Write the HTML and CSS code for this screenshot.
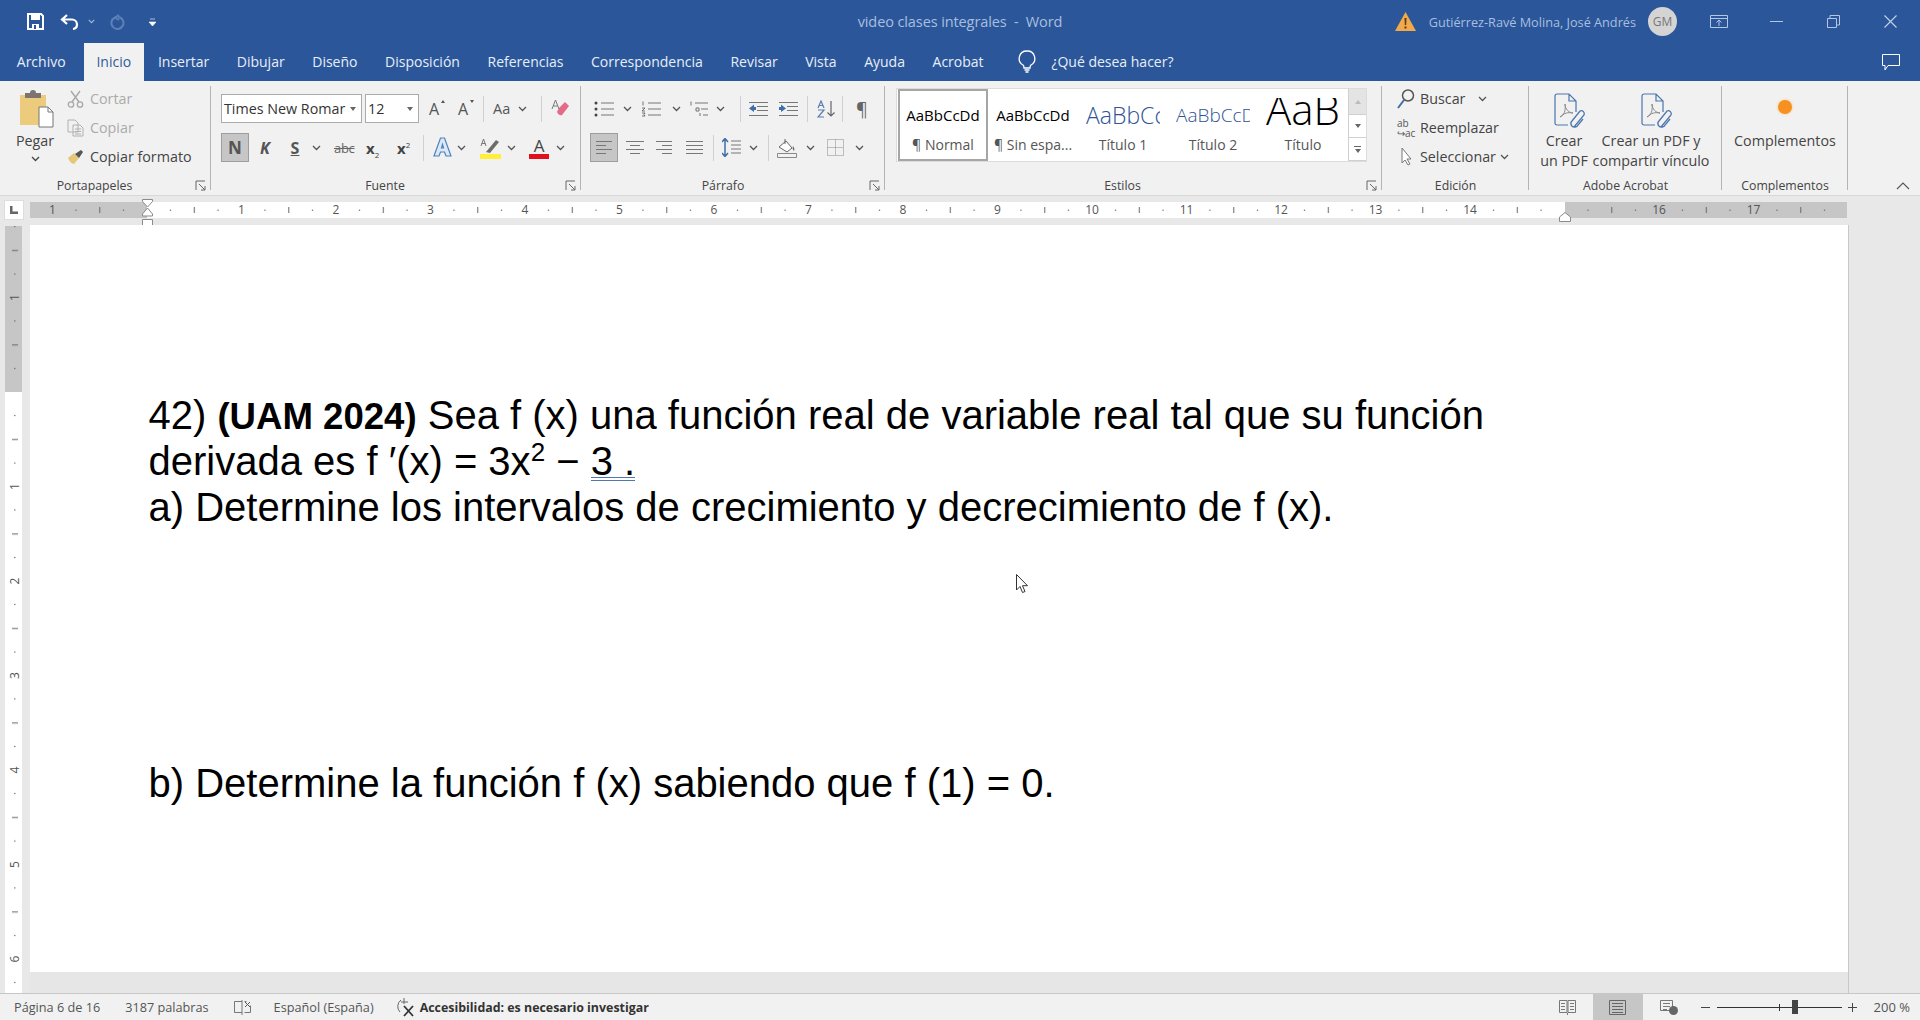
FILE: index.html
```html
<!DOCTYPE html>
<html lang="es">
<head>
<meta charset="utf-8">
<title>video clases integrales - Word</title>
<link rel="stylesheet" href="styles.css">
</head>
<body>
<svg class="defs" width="0" height="0" aria-hidden="true">
  <symbol id="chev" viewBox="0 0 9 6"><path d="M1 1l3.5 3.5L8 1" fill="none" stroke="currentColor" stroke-width="1.3"/></symbol>
  <symbol id="launch" viewBox="0 0 12 12"><path d="M1 10V1h9M4 4l6 6M10 6v4H6" fill="none" stroke="#666" stroke-width="1"/></symbol>
  <symbol id="pdf" viewBox="0 0 34 36"><path d="M2 3a2 2 0 012-2h12l7 7v11M15 32H4a2 2 0 01-2-2V3M16 1v7h7" fill="none" stroke="#4a76ad" stroke-width="1.200"/><path d="M7 24c4-1 6-7 5-13 0 5 4 9 8 9-5-1-9 0-13 4z" fill="none" stroke="#8a8a8a" stroke-width="1"/><path d="M21 34l10-12a3 3 0 00-4-4l-8 10a3.500 3.500 0 003 6 3 3 0 003-2l5-6" fill="none" stroke="#4a76ad" stroke-width="1.300"/></symbol>
</svg>

<header class="titlebar">
  <div class="qat">
    <svg class="ic-save" width="17" height="17" viewBox="0 0 17 17"><path d="M1 1h13l2 2v13H1z" fill="none" stroke="#fff" stroke-width="2"/><path d="M4 1h9v6H4zM5 11h7v5H5z" fill="#fff"/><path d="M7 12h2v4H7z" fill="#2b579a"/></svg>
    <svg class="ic-undo" width="20" height="16" viewBox="0 0 20 16"><path d="M7 1L2 5.500 7 10M2 5.500h10a5 5 0 015 5 4.500 4.500 0 01-4 4.500" fill="none" stroke="#fff" stroke-width="2.200"/></svg>
    <svg class="ic-chev-q" width="7" height="5"><use href="#chev"/></svg>
    <svg class="ic-redo" width="16" height="16" viewBox="0 0 16 16"><path d="M10 1L6 3.500 10 6M6 3.500A6 6 0 109 3" fill="none" stroke="#5c80b8" stroke-width="2"/></svg>
    <svg class="ic-custom" width="7" height="8" viewBox="0 0 7 8"><path d="M1 1h5M0 4h7L3.500 8z" fill="#fff" stroke="#fff" stroke-width=".6"/></svg>
  </div>
  <div class="doc-title">video clases integrales&nbsp; - &nbsp;Word</div>
  <div class="account">
    <svg width="21" height="19" viewBox="0 0 21 19"><path d="M10.500 0L21 19H0z" fill="#f0a94b"/><path d="M9.500 6h2l-.3 7h-1.400zM9.500 14.500h2v2h-2z" fill="#5a3a10"/></svg>
    <span class="user">Gutiérrez-Ravé Molina, José Andrés</span>
    <span class="avatar">GM</span>
    <svg class="ic-display" width="18" height="13" viewBox="0 0 18 13"><path d="M.5.500h17v12H.500zM.5 3.500h17M9 11V5M6.500 7.500L9 5l2.500 2.500" fill="none" stroke="#b4c6e4"/></svg>
    <svg class="ic-min" width="13" height="1" viewBox="0 0 13 1"><path d="M0 .5h13" stroke="#b4c6e4"/></svg>
    <svg class="ic-restore" width="13" height="13" viewBox="0 0 13 13"><path d="M.5 3.500h9v9h-9zM3 3.500V.5h9.500V10H9.500" fill="none" stroke="#b4c6e4"/></svg>
    <svg class="ic-close" width="13" height="13" viewBox="0 0 13 13"><path d="M.5.5l12 12M12.500.5l-12 12" stroke="#c3d2ea" stroke-width="1.100"/></svg>
  </div>
</header>

<nav class="tabs">
  <span class="tab">Archivo</span>
  <span class="tab active">Inicio</span>
  <span class="tab">Insertar</span>
  <span class="tab">Dibujar</span>
  <span class="tab">Diseño</span>
  <span class="tab">Disposición</span>
  <span class="tab">Referencias</span>
  <span class="tab">Correspondencia</span>
  <span class="tab">Revisar</span>
  <span class="tab">Vista</span>
  <span class="tab">Ayuda</span>
  <span class="tab">Acrobat</span>
  <svg class="ic-bulb" width="18" height="23" viewBox="0 0 18 23"><path d="M9 1a7.500 7.500 0 00-4 14c.8.600 1 1.500 1 3h6c0-1.500.2-2.400 1-3A7.500 7.500 0 009 1zM6.500 20h5M7.500 22h3" fill="none" stroke="#fff" stroke-width="1.300"/></svg>
  <span class="tell">¿Qué desea hacer?</span>
  <svg class="ic-comment" width="18" height="17" viewBox="0 0 18 17"><path d="M.5.500h17v11H6L3 16v-4.500H.5z" fill="none" stroke="#fff"/></svg>
</nav>

<section class="ribbon">
  <div class="group g-clip">
    <div class="body clip-body">
      <div class="paste">
        <svg width="34" height="38" viewBox="0 0 34 38"><path d="M0 5h26v30H0z" fill="#eccb7c"/><path d="M5 3h5a3 3 0 016 0h5v5H5z" fill="#7c7470"/><path d="M19 17h9l5 5v15H19z" fill="#fff" stroke="#777"/><path d="M28 17v5h5" fill="none" stroke="#777"/></svg>
        <span class="paste-label">Pegar</span>
        <svg class="paste-chev" width="9" height="6"><use href="#chev"/></svg>
      </div>
      <div class="clip-list">
        <div class="clip-row off"><svg width="17" height="18" viewBox="0 0 17 18"><path d="M4 1l8 11M13 1L5 12" stroke="#a8a8a8" stroke-width="1.400" fill="none"/><circle cx="4" cy="14.500" r="2.700" fill="none" stroke="#a8a8a8" stroke-width="1.300"/><circle cx="13" cy="14.500" r="2.700" fill="none" stroke="#a8a8a8" stroke-width="1.300"/></svg><span>Cortar</span></div>
        <div class="clip-row off"><svg width="17" height="18" viewBox="0 0 17 18"><path d="M1 1h7l3 3v9H1zM6 6h7l3 3v8H6z" fill="#f1f1f1" stroke="#b0b0b0"/><path d="M8 10h6M8 12.500h6M8 15h6" stroke="#b0b0b0"/></svg><span>Copiar</span></div>
        <div class="clip-row"><svg width="17" height="16" viewBox="0 0 17 16"><path d="M1 9l6-5 5 5-5 6c-2 0-5-3-6-6z" fill="#e4c878"/><path d="M8 5l6-4 2 2-4 6z" fill="#555"/></svg><span>Copiar formato</span></div>
      </div>
    </div>
    <div class="label">Portapapeles</div>
    <svg class="launcher" width="12" height="12"><use href="#launch"/></svg>
  </div>

  <div class="group g-font">
    <div class="body rows">
      <div class="row">
        <div class="combo c-font"><span>Times New Romar</span><b class="tri"></b></div>
        <div class="combo c-size"><span>12</span><b class="tri"></b></div>
        <span class="gl g-a ml10">A<i class="up"></i></span>
        <span class="gl g-a ml16">A<i class="down"></i></span>
        <span class="sep ml12"></span>
        <span class="gl g-aa ml9">Aa</span>
        <svg class="ml6 chev" width="9" height="6"><use href="#chev"/></svg>
        <span class="sep ml14"></span>
        <svg class="ml9" width="18" height="19" viewBox="0 0 18 19"><path d="M8 9l6-6 4 4-7 9c-2 1-4-1-5-3z" fill="#e56a86"/><path d="M1 10L4.500 1 8 10M2.500 7h4" fill="none" stroke="#777"/></svg>
      </div>
      <div class="row">
        <span class="pressed gl-b">N</span>
        <span class="gl-b gl-i ml9">K</span>
        <span class="gl-b gl-u ml16">S</span>
        <svg class="ml10 chev" width="9" height="6"><use href="#chev"/></svg>
        <span class="gl-strike ml13">abc</span>
        <span class="gl-sub ml12">x<sub>2</sub></span>
        <span class="gl-sub ml13">x<sup>2</sup></span>
        <span class="sep ml8"></span>
        <svg class="ml9" width="19" height="21" viewBox="0 0 19 21"><path d="M7.500 1h4L18 19h-5l-1.500-4h-4L6 19H1zM8.500 11h2l-1-3.500z" fill="#dbe8f6" stroke="#4f82bd" stroke-width="1.200"/></svg>
        <svg class="ml5 chev" width="9" height="6"><use href="#chev"/></svg>
        <svg class="ml14" width="21" height="22" viewBox="0 0 21 22"><path d="M1 9l2.500-7L6 9M1.800 6.500h3.500" fill="none" stroke="#777"/><path d="M6 15L16 3l3 2-9 11z" fill="#6c6c6c"/><path d="M0 17h21v5H0z" fill="#ffef3a"/></svg>
        <svg class="ml6 chev" width="9" height="6"><use href="#chev"/></svg>
        <span class="gl-color ml13">A</span>
        <svg class="ml7 chev" width="9" height="6"><use href="#chev"/></svg>
      </div>
    </div>
    <div class="label">Fuente</div>
    <svg class="launcher" width="12" height="12"><use href="#launch"/></svg>
  </div>

  <div class="group g-para">
    <div class="body rows">
      <div class="row row-p1">
        <svg width="20" height="16" viewBox="0 0 20 16"><path d="M7 2h13M7 8h13M7 14h13" stroke="#777"/><circle cx="2" cy="2" r="1.500" fill="#444"/><circle cx="2" cy="8" r="1.500" fill="#444"/><circle cx="2" cy="14" r="1.500" fill="#444"/></svg>
        <svg class="ml9 chev" width="9" height="6"><use href="#chev"/></svg>
        <svg class="ml9" width="20" height="16" viewBox="0 0 20 16"><path d="M7 2h13M7 8h13M7 14h13" stroke="#777"/><path d="M2 .5v4M1 7h3L1 10h3M1 12h3l-1 1.500L4 15H1" fill="none" stroke="#555" stroke-width=".8"/></svg>
        <svg class="ml11 chev" width="9" height="6"><use href="#chev"/></svg>
        <svg class="ml8" width="20" height="16" viewBox="0 0 20 16"><path d="M6 2h13M12 8h7M14 14h5" stroke="#777"/><path d="M2 .5v4M7 7h3v3H7zM11 12v3" fill="none" stroke="#555" stroke-width=".8"/></svg>
        <svg class="ml7 chev" width="9" height="6"><use href="#chev"/></svg>
        <span class="sep ml15"></span>
        <svg class="ml8" width="19" height="14" viewBox="0 0 19 14"><path d="M0 .5h19M8 4.500h11M8 8.500h11M0 13.500h19" stroke="#777"/><path d="M0 6.500l5-4v2.500h2v3H5V10z" fill="#3f6ea8"/></svg>
        <svg class="ml11" width="19" height="14" viewBox="0 0 19 14"><path d="M0 .5h19M8 4.500h11M8 8.500h11M0 13.500h19" stroke="#777"/><path d="M7 6.500l-5-4v2.500H0v3h2V10z" fill="#3f6ea8"/></svg>
        <span class="sep ml9"></span>
        <svg class="ml9" width="18" height="18" viewBox="0 0 18 18"><path d="M1 8l3-7 3 7M2 5.500h4M1 10h6L1 17h6" fill="none" stroke="#5a7faf" stroke-width="1.200"/><path d="M14 1v15M10.500 12.500L14 16l3.500-3.500" fill="none" stroke="#666" stroke-width="1.200"/></svg>
        <span class="sep ml7"></span>
        <span class="pilcrow ml13">¶</span>
      </div>
      <div class="row">
        <span class="pressed"><svg width="16" height="13" viewBox="0 0 16 13"><path d="M0 .5h16M0 4.500h10M0 8.500h16M0 12.500h10" stroke="#777"/></svg></span>
        <svg class="ml8" width="18" height="13" viewBox="0 0 18 13"><path d="M0 .5h18M4 4.500h10M0 8.500h18M4 12.500h10" stroke="#777"/></svg>
        <svg class="ml12" width="16" height="13" viewBox="0 0 16 13"><path d="M0 .5h16M6 4.500h10M0 8.500h16M6 12.500h10" stroke="#777"/></svg>
        <svg class="ml14" width="17" height="13" viewBox="0 0 17 13"><path d="M0 .5h17M0 4.500h17M0 8.500h17M0 12.500h17" stroke="#777"/></svg>
        <span class="sep ml10"></span>
        <svg class="ml8" width="19" height="19" viewBox="0 0 19 19"><path d="M3 1v17M0 4l3-3.500L6 4M0 15l3 3.500L6 15" fill="none" stroke="#3f6ea8" stroke-width="1.500"/><path d="M9 3h10M9 7h10M9 11h10M9 15h10" stroke="#777"/></svg>
        <svg class="ml8 chev" width="9" height="6"><use href="#chev"/></svg>
        <span class="sep ml10"></span>
        <svg class="ml8" width="20" height="20" viewBox="0 0 20 20"><path d="M2 9l7-6 6 7-5 4z" fill="#fff" stroke="#666"/><path d="M8 1v5" stroke="#666"/><path d="M16 8c1 2 2 3 1 5-1-1-2-3-1-5z" fill="#666"/><path d="M.5 15.500h19v4H.5z" fill="#f1f1f1" stroke="#888"/></svg>
        <svg class="ml9 chev" width="9" height="6"><use href="#chev"/></svg>
        <svg class="ml12" width="17" height="17" viewBox="0 0 17 17"><path d="M.5.500h16v16H.5zM8.500.5v16M.5 8.500h16" fill="none" stroke="#888" stroke-dasharray="1 1"/></svg>
        <svg class="ml11 chev" width="9" height="6"><use href="#chev"/></svg>
      </div>
    </div>
    <div class="label">Párrafo</div>
    <svg class="launcher" width="12" height="12"><use href="#launch"/></svg>
  </div>

  <div class="group g-styles">
    <div class="body gallery-wrap">
      <div class="gallery">
        <div class="style selected"><span class="prev">AaBbCcDd</span><span class="name">¶ Normal</span></div>
        <div class="style"><span class="prev">AaBbCcDd</span><span class="name">¶ Sin espa...</span></div>
        <div class="style"><span class="prev p-h1">AaBbCc</span><span class="name">Título 1</span></div>
        <div class="style"><span class="prev p-h2">AaBbCcD</span><span class="name">Título 2</span></div>
        <div class="style"><span class="prev p-t">AaB</span><span class="name">Título</span></div>
        <div class="scroller">
          <span class="sc off"><b class="tri-up"></b></span>
          <span class="sc"><b class="tri"></b></span>
          <span class="sc sc-more"><i></i><b class="tri"></b></span>
        </div>
      </div>
    </div>
    <div class="label">Estilos</div>
    <svg class="launcher" width="12" height="12"><use href="#launch"/></svg>
  </div>

  <div class="group g-edit">
    <div class="body edit-list">
      <div class="edit-row"><svg width="18" height="22" viewBox="0 0 18 22"><circle cx="11" cy="7.500" r="5.500" fill="none" stroke="#555" stroke-width="1.500"/><path d="M7 12l-6 8" stroke="#3f6ea8" stroke-width="2"/></svg><span>Buscar</span><svg class="ml13 chev" width="9" height="6"><use href="#chev"/></svg></div>
      <div class="edit-row"><span class="abac">ab<br>↪ac</span><span>Reemplazar</span></div>
      <div class="edit-row"><svg width="18" height="19" viewBox="0 0 18 19"><path d="M5 1v15l3-3 3 5 2-1-3-5h4z" fill="#fff" stroke="#777"/></svg><span>Seleccionar</span><svg class="ml4 chev" width="9" height="6"><use href="#chev"/></svg></div>
    </div>
    <div class="label">Edición</div>
  </div>

  <div class="group g-acro">
    <div class="body acro-body">
      <div class="big b-pdf1"><svg width="34" height="36"><use href="#pdf"/></svg><span>Crear<br>un PDF</span></div>
      <div class="big b-pdf2"><svg width="34" height="36"><use href="#pdf"/></svg><span>Crear un PDF y<br>compartir vínculo</span></div>
    </div>
    <div class="label">Adobe Acrobat</div>
  </div>

  <div class="group g-comp">
    <div class="body comp-body"><i class="dot"></i><span>Complementos</span></div>
    <div class="label">Complementos</div>
  </div>

  <div class="collapse"><svg width="14" height="8" viewBox="0 0 14 8"><path d="M1 7l6-6 6 6" fill="none" stroke="#555" stroke-width="1.100"/></svg></div>
</section>

<div class="rulerbar">
  <div class="tabsel"><svg width="8" height="8" viewBox="0 0 8 8"><path d="M0 0h2.500v5.500H8V8H0z" fill="#666"/></svg></div>
  <div class="hruler">
    <svg width="1817" height="16" viewBox="0 0 1817 16">
      <defs>
        <pattern id="ht" patternUnits="userSpaceOnUse" x="117" y="0" width="94.5" height="16">
          <rect x="23" y="7.500" width="1" height="1.500" fill="#666"/>
          <rect x="46.800" y="5" width="1" height="6" fill="#666"/>
          <rect x="70.500" y="7.500" width="1" height="1.500" fill="#666"/>
        </pattern>
      </defs>
      <rect width="1817" height="16" fill="#c6c6c6"/>
      <rect x="117" width="1418" height="16" fill="#fff"/>
      <rect width="1817" height="16" fill="url(#ht)"/>
      <g class="rn">
        <text x="22.500" y="12">1</text><text x="211.500" y="12">1</text><text x="306" y="12">2</text><text x="400.500" y="12">3</text><text x="495" y="12">4</text><text x="589.500" y="12">5</text><text x="684" y="12">6</text><text x="778.500" y="12">7</text><text x="873" y="12">8</text><text x="967.500" y="12">9</text><text x="1062" y="12">10</text><text x="1156.500" y="12">11</text><text x="1251" y="12">12</text><text x="1345.500" y="12">13</text><text x="1440" y="12">14</text><text x="1629" y="12">16</text><text x="1723.500" y="12">17</text>
      </g>
    </svg>
    <svg class="indent-l" width="12" height="28" viewBox="0 0 12 28"><path d="M.5.500h10v2L5.500 8 .5 2.500zM5.500 9l5 6v2H.5v-2zM.5 20.500h10v7H.5z" fill="#fff" stroke="#8a8a8a"/></svg>
    <svg class="indent-r" width="12" height="10" viewBox="0 0 12 10"><path d="M.5 9.500V5L6 .5 11.500 5v4.500z" fill="#fff" stroke="#8a8a8a"/></svg>
  </div>
</div>

<main class="workspace">
  <div class="vcol">
    <svg class="vruler" width="17" height="767" viewBox="0 0 17 767">
      <defs>
        <pattern id="vt" patternUnits="userSpaceOnUse" x="0" y="71.500" width="17" height="94.500">
          <rect x="9" y="23" width="1.500" height="1" fill="#666"/>
          <rect x="7" y="47" width="6" height="1" fill="#666"/>
          <rect x="9" y="70.500" width="1.500" height="1" fill="#666"/>
        </pattern>
      </defs>
      <rect width="17" height="767" fill="#fff"/>
      <rect width="17" height="166" fill="#c6c6c6"/>
      <rect width="17" height="767" fill="url(#vt)"/>
      <g class="rn">
        <text transform="translate(14 71.500) rotate(-90)">1</text>
        <text transform="translate(14 260.500) rotate(-90)">1</text>
        <text transform="translate(14 355) rotate(-90)">2</text>
        <text transform="translate(14 449.500) rotate(-90)">3</text>
        <text transform="translate(14 544) rotate(-90)">4</text>
        <text transform="translate(14 638.500) rotate(-90)">5</text>
        <text transform="translate(14 733) rotate(-90)">6</text>
      </g>
    </svg>
  </div>
  <div class="pagearea">
    <article class="page">
      <p>42) <strong>(UAM 2024)</strong> Sea f (x) una función real de variable real tal que su función</p>
      <p>derivada es f <span class="prime">′</span>(x) = 3x<sup>2</sup> − <span class="grammar">3 .</span></p>
      <p class="part-a">a) Determine los intervalos de crecimiento y decrecimiento de f (x).</p>
      <p>b) Determine la función f (x) sabiendo que f (1) = 0.</p>
      <svg class="cursor" width="13" height="20" viewBox="0 0 13 20"><path d="M.5.500v15.500l3.500-3.500 2.500 6 2.500-1-2.500-5.800h5z" fill="#fff" stroke="#333"/></svg>
    </article>
  </div>
  <div class="rightgutter"></div>
</main>

<footer class="status">
  <span class="st st-page">Página 6 de 16</span>
  <span class="st st-words">3187 palabras</span>
  <svg class="st-book" width="17" height="15" viewBox="0 0 17 15"><path d="M8 1.500H.5v11H8M8 0v15M10.500 1.500h2M10.500 12.500h6v-7" fill="none" stroke="#777"/><path d="M11 2l5 5M16 2l-5 5" stroke="#555"/></svg>
  <span class="st st-lang">Español (España)</span>
  <svg class="st-acc" width="21" height="20" viewBox="0 0 21 20"><path d="M6 3a8 8 0 00-1 12M9 1v6M6 5h7" fill="none" stroke="#666"/><path d="M9 9l9 10M18 9L9 19" stroke="#333" stroke-width="1.800"/></svg>
  <strong class="st st-acc-t">Accesibilidad: es necesario investigar</strong>
  <div class="st-right">
    <svg width="17" height="15" viewBox="0 0 17 15"><path d="M.5.500H8v12H.5zM9 .5h7.500v12H9zM2 3.500h4M2 6.500h4M2 9.500h4M11 3.500h4M11 6.500h4M11 9.500h4M8.500 13v2" fill="none" stroke="#777"/></svg>
    <span class="view-on"><svg width="17" height="15" viewBox="0 0 17 15"><path d="M.5.500h16v14H.5zM3 3.500h11M3 6.500h11M3 9.500h11M3 12.500h11" fill="none" stroke="#666"/></svg></span>
    <svg width="18" height="15" viewBox="0 0 18 15"><path d="M12 10.500H.5V.5h12V7M3 3.500h7M3 6.500h7M3 9.500h4" fill="none" stroke="#777"/><circle cx="13.500" cy="10.500" r="4.500" fill="#666"/></svg>
    <span class="zm-minus"></span>
    <div class="slider"><i class="tick"></i><i class="thumb"></i></div>
    <span class="zm-plus"></span>
    <span class="st zm-val">200 %</span>
  </div>
</footer>
</body>
</html>
```

FILE: styles.css
```css
* { box-sizing: border-box; }
html, body { margin: 0; height: 100%; }
body {
  display: flex; flex-direction: column; height: 1020px; overflow: hidden;
  background: #e6e6e6; color: #444;
  font-family: "Open Sans", "Noto Sans", sans-serif; font-size: 14.300px;
}
svg { display: block; flex: none; }
.defs { position: absolute; }
.chev { color: #555; }

.ml4 { margin-left: 4px; } .ml5 { margin-left: 5px; } .ml6 { margin-left: 6px; }
.ml7 { margin-left: 7px; } .ml8 { margin-left: 8px; } .ml9 { margin-left: 9px; }
.ml10 { margin-left: 10px; } .ml11 { margin-left: 11px; } .ml12 { margin-left: 12px; }
.ml13 { margin-left: 13px; } .ml14 { margin-left: 14px; } .ml15 { margin-left: 15px; }
.ml16 { margin-left: 16px; }

/* title bar */
.titlebar {
  height: 43px; flex: none; background: #2b579a;
  display: grid; grid-template-columns: 1fr auto 1fr; align-items: center;
}
.qat { display: flex; align-items: center; padding-left: 27px; }
.ic-undo { margin-left: 16px; }
.ic-chev-q { margin-left: 8px; color: #a8bcdc; }
.ic-redo { margin-left: 14px; }
.ic-custom { margin-left: 24px; }
.doc-title { color: #a9bedf; font-size: 14.500px; letter-spacing: -.1px; white-space: nowrap; }
.account { display: flex; align-items: center; justify-content: flex-end; padding-right: 23px; }
.user { margin-left: 13px; color: #a9bedf; font-size: 12.700px; white-space: nowrap; }
.avatar {
  margin-left: 12px; width: 29px; height: 29px; border-radius: 50%; background: #d4d4d4;
  color: #777; font-size: 12px; display: flex; align-items: center; justify-content: center;
}
.ic-display { margin-left: 33px; }
.ic-min { margin-left: 42px; }
.ic-restore { margin-left: 44px; }
.ic-close { margin-left: 44px; }

/* tabs */
.tabs {
  height: 38px; flex: none; background: #2b579a; display: flex; align-items: center;
  padding-left: 3px; color: #fff;
}
.tab {
  height: 38px; padding: 0 13.800px 2px; display: flex; align-items: center;
  font-size: 14px; color: #e8eef7; white-space: nowrap;
}
.tab.active { background: #f1f1f1; color: #2f5b99; padding: 0 13px 2px 12px; margin: 0 0 0 5px; }
.ic-bulb { margin-left: 21px; margin-bottom: 2px; }
.tell { margin-left: 15px; margin-bottom: 2px; color: #e8eef7; font-size: 14px; white-space: nowrap; }
.ic-comment { margin-left: auto; margin-right: 20px; }

/* ribbon */
.ribbon { height: 114px; flex: none; background: #f1f1f1; display: flex; position: relative; }
.group {
  height: 114px; display: flex; flex-direction: column; position: relative; flex: none;
  background: linear-gradient(#b4b4b4, #b4b4b4) right 5px / 1px 104px no-repeat;
}
.g-clip { width: 211px; }
.g-font { width: 370px; }
.g-para { width: 304px; }
.g-styles { width: 497px; }
.g-edit { width: 147px; }
.g-acro { width: 193px; }
.g-comp { width: 126px; }
.body { flex: 1; min-height: 0; }
.label { height: 18px; flex: none; font-size: 12.300px; text-align: center; color: #444; line-height: 18px; }
.g-clip .label, .g-font .label, .g-styles .label { padding-right: 22px; }
.g-para .label { padding-right: 20px; }
.launcher { position: absolute; right: 4px; bottom: 3px; }
.collapse { flex: 1; display: flex; justify-content: flex-end; align-items: flex-end; padding: 0 10px 5px 0; }

.clip-body { display: flex; padding-left: 10px; }
.paste { width: 50px; display: flex; flex-direction: column; align-items: center; padding-top: 9px; }
.paste svg:first-child { margin-left: 4px; }
.paste-label { line-height: 20px; margin-top: 3px; }
.paste-chev { margin-top: 5px; }
.clip-list { margin-left: 7px; padding-top: 3px; }
.clip-row { height: 29px; display: flex; align-items: center; gap: 6px; white-space: nowrap; }
.clip-row.off { color: #ababab; }

.rows { padding: 13px 0 0 10px; }
.g-para .rows { padding-left: 9px; }
.row { height: 29px; display: flex; align-items: center; margin-bottom: 10px; }
.row-p1 { padding-left: 4px; }
.combo {
  height: 29px; border: 1px solid #ababab; background: #fff; display: flex; align-items: center;
  padding: 0 5px 0 2px; color: #333; justify-content: space-between; flex: none;
}
.c-font { width: 141px; white-space: nowrap; }
.c-size { width: 54px; margin-left: 3px; }
.tri { width: 0; height: 0; border: 3.5px solid transparent; border-top: 4px solid #666; border-bottom: 0; flex: none; display: block; }
.tri-up { width: 0; height: 0; border: 3px solid transparent; border-bottom: 4px solid #bbb; border-top: 0; display: block; }
.sep { width: 1px; height: 26px; background: #d0d0d0; flex: none; }
.gl { font-size: 16px; color: #555; position: relative; line-height: 22px; flex: none; }
.g-a { width: 13px; }
.g-a i { position: absolute; right: -3px; top: 2px; width: 0; height: 0; border: 2.500px solid transparent; }
.g-a .up { border-bottom: 3px solid #555; border-top: 0; }
.g-a .down { border-top: 3px solid #555; border-bottom: 0; }
.g-aa { font-size: 14.500px; width: 19px; }
.gl-b { font-weight: 700; font-size: 17px; color: #555; width: 14px; text-align: center; flex: none; }
.gl-i { font-style: italic; font-size: 16px; }
.gl-u { text-decoration: underline; font-size: 16px; }
.pressed {
  width: 28px; height: 29px; flex: none; background: #c6c6c6; border: 1px solid #9e9e9e;
  display: flex; align-items: center; justify-content: center;
}
.gl-strike { font-size: 13px; color: #666; text-decoration: line-through; flex: none; width: 20px; letter-spacing: -.3px; }
.gl-sub { font-weight: 700; font-size: 15px; color: #444; width: 18px; flex: none; }
.gl-sub sub, .gl-sub sup { font-size: 8px; font-weight: 400; line-height: 0; }
.gl-color {
  width: 20px; height: 22px; text-align: center; font-size: 17px; line-height: 18px; color: #444; flex: none;
  border-bottom: 5px solid #e2101c;
}
.pilcrow { font-size: 18px; color: #666; line-height: 20px; flex: none; width: 12px; text-align: center; }

/* styles gallery */
.gallery-wrap { padding: 7px 0 0 11px; }
.gallery {
  width: 471px; height: 74px; background: #fff; border: 1px solid #dcdcdc; display: flex; padding-left: 1px;
}
.style {
  width: 90px; height: 72px; flex: none; display: flex; flex-direction: column; align-items: center;
  overflow: hidden; color: #000;
}
.style.selected { border: 3px solid #fff; outline: 2px solid #a6a6a6; outline-offset: -2px; }
.prev { height: 46px; line-height: 52px; font-size: 15px; white-space: nowrap; }
.selected .prev { height: 43px; line-height: 46px; }
.name { font-size: 14px; color: #555; line-height: 20px; white-space: nowrap; }
.p-h1 { font-size: 23px; color: #2f5496; font-weight: 300; width: 74px; overflow: hidden; }
.p-h2 { font-size: 19px; color: #2f5496; font-weight: 300; width: 74px; overflow: hidden; }
.p-t { font-size: 42px; height: 37px; margin-top: 9px; line-height: 21px; font-weight: 300; overflow: hidden; }
.scroller { margin-left: auto; width: 18px; display: flex; flex-direction: column; border-left: 1px solid #d0d0d0; }
.sc { height: 24px; flex: 1; display: flex; flex-direction: column; gap: 2px; align-items: center; justify-content: center; border-bottom: 1px solid #d0d0d0; background: #fff; }
.sc.off { background: #e4e4e4; height: 26px; flex: none; }
.sc-more i { width: 7px; height: 1px; background: #666; display: block; }

/* editing */
.edit-list { padding: 3px 0 0 15px; }
.edit-row { height: 29px; display: flex; align-items: center; white-space: nowrap; }
.edit-row > svg:first-child { margin-right: 5px; }
.abac { width: 18px; margin-right: 5px; font-size: 10px; line-height: 10px; color: #555; flex: none; }

/* acrobat */
.acro-body { display: flex; padding-top: 12px; }
.big { display: flex; flex-direction: column; align-items: center; text-align: center; flex: none; }
.big svg { margin-left: 11px; }
.big span { line-height: 20px; margin-top: 2px; white-space: nowrap; }
.b-pdf1 { width: 70px; }
.b-pdf2 { width: 104px; }
.comp-body { display: flex; flex-direction: column; align-items: center; padding-top: 19px; }
.dot { width: 14px; height: 14px; border-radius: 50%; background: #f6901e; box-shadow: 0 0 3px #f9c37c; display: block; }
.comp-body span { margin-top: 17px; line-height: 20px; }

/* ruler */
.rulerbar { height: 30px; flex: none; display: flex; background: #e8e8e8; padding-top: 6px; border-top: 1px solid #d8d8d8; }
.tabsel { width: 20px; height: 20px; margin: -2px 0 0 4px; background: #fff; display: flex; align-items: center; justify-content: center; border: 1px solid #ddd; flex: none; }
.hruler { margin-left: 6px; position: relative; height: 16px; }
.rn text { font: 12px "Open Sans", sans-serif; fill: #555; text-anchor: middle; }
.indent-l { position: absolute; left: 112px; top: -3px; }
.indent-r { position: absolute; left: 1529px; top: 10px; }

/* document */
.workspace { flex: 1; min-height: 0; display: flex; }
.vcol { width: 30px; flex: none; padding: 1px 0 0 5px; background: #e8e8e8; }
.pagearea { width: 1818px; flex: none; padding-bottom: 21px; background: #e6e6e6; }
.page {
  height: 100%; background: #fff; padding: 167px 0 0 118.500px; position: relative; color: #000;
  font-family: "Liberation Sans", Arial, sans-serif; font-size: 40px; line-height: 46px;
}
.page p { margin: 0; height: 46px; white-space: nowrap; }
.page strong { font-size: 36.600px; }
.page sup { font-size: 26px; line-height: 0; }
.prime { line-height: 0; }
.page .part-a { margin-bottom: 230px; }
.grammar {
  background:
    linear-gradient(#4f76ae, #4f76ae) left bottom 5px / 100% 1px no-repeat,
    linear-gradient(#4f76ae, #4f76ae) left bottom 2px / 100% 1px no-repeat;
}
.cursor { position: absolute; left: 986px; top: 349px; }
.rightgutter { flex: 1; background: #e8e8e8; border-left: 1px solid #c8c8c8; }

/* status bar */
.status {
  height: 27px; flex: none; background: #f1f1f1; border-top: 1px solid #c6c6c6;
  display: flex; align-items: center; padding-left: 14px; font-size: 12.700px; color: #555;
}
.st { white-space: nowrap; }
.st-words { margin-left: 25px; }
.st-book { margin-left: 25px; }
.st-lang { margin-left: 23px; }
.st-acc { margin-left: 21px; }
.st-acc-t { margin-left: 4px; color: #333; font-size: 12.400px; }
.st-right { margin-left: auto; display: flex; align-items: center; height: 26px; padding-right: 10px; }
.view-on { width: 50px; height: 26px; margin: 0 17px; background: #c6c6c6; display: flex; align-items: center; justify-content: center; }
.zm-minus { width: 9px; height: 1px; background: #444; margin-left: 23px; }
.slider { width: 125px; height: 1px; background: #333; margin-left: 7px; position: relative; }
.tick { position: absolute; left: 62px; top: -3px; width: 1px; height: 7px; background: #333; }
.thumb { position: absolute; left: 75px; top: -7px; width: 6px; height: 14px; background: #444; }
.zm-plus { width: 9px; height: 9px; margin-left: 6px; background: linear-gradient(#444,#444) center / 9px 1px no-repeat, linear-gradient(#444,#444) center / 1px 9px no-repeat; }
.zm-val { margin-left: 17px; font-size: 13px; }
```
